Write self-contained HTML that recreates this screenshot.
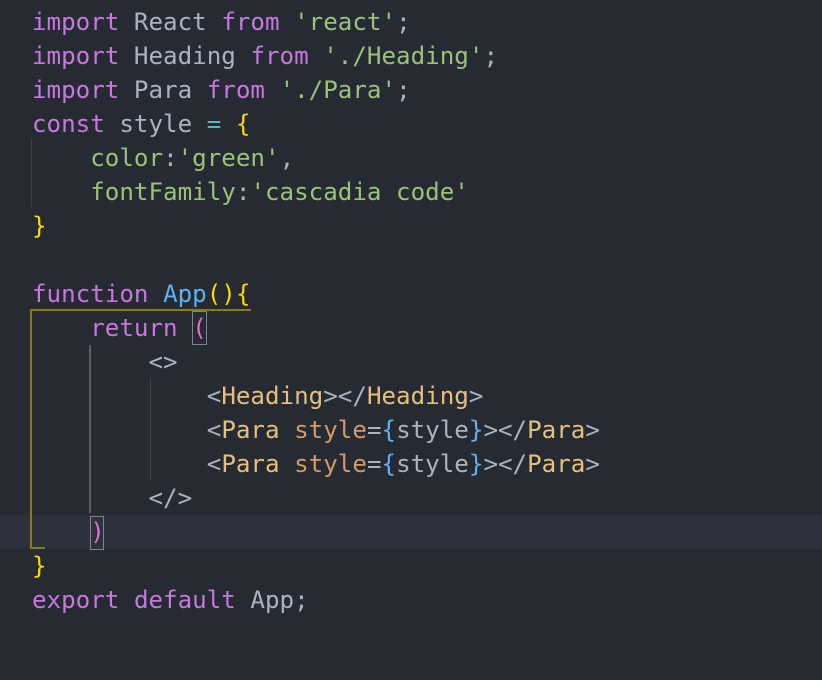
<!DOCTYPE html><html><head><style>
body{margin:0;background:#262a33;width:822px;height:680px;overflow:hidden;position:relative}
pre{margin:0;position:absolute;left:32px;top:5px;font-family:"DejaVu Sans Mono","Liberation Mono",monospace;font-size:24.2px;line-height:34px;color:#abb2bf}
.k{color:#c678dd}.s{color:#98c379}.y{color:#ffd700}.b{color:#61afef}.c{color:#56b6c2}.t{color:#e5c07b}.a{color:#d19a66}.g{color:#abb2bf}
.p{color:#da70d6}
.abs{position:absolute}
</style></head><body>
<div class="abs" style="left:0;top:515px;width:822px;height:34px;background:#2c313c"></div>
<div class="abs" style="left:31px;top:139px;width:1px;height:68px;background:#3b404a"></div>
<div class="abs" style="left:89px;top:345px;width:2px;height:168px;background:#5a606b"></div>
<div class="abs" style="left:150px;top:379px;width:1px;height:102px;background:#3f444e"></div>
<div class="abs" style="left:30px;top:309px;width:221px;height:240px;border-top:2px solid #8a7a1c;border-left:2px solid #8a7a1c;box-sizing:border-box"></div>
<div class="abs" style="left:30px;top:547px;width:15px;height:2px;background:#8a7a1c"></div>
<div class="abs" style="left:192px;top:311px;width:13px;height:32px;border:1px solid #7d8590"></div>
<div class="abs" style="left:90px;top:516px;width:12px;height:32px;border:1px solid #7d8590"></div>
<pre><span class="k">import</span> React <span class="k">from</span> <span class="s">'react'</span>;
<span class="k">import</span> Heading <span class="k">from</span> <span class="s">'./Heading'</span>;
<span class="k">import</span> Para <span class="k">from</span> <span class="s">'./Para'</span>;
<span class="k">const</span> style <span class="c">=</span> <span class="y">{</span>
    <span class="s">color</span>:<span class="s">'green'</span>,
    <span class="s">fontFamily</span>:<span class="s">'cascadia code'</span>
<span class="y">}</span>

<span class="k">function</span> <span class="b">App</span><span class="y">()</span><span class="y">{</span>
    <span class="k">return</span> <span class="p">(</span>
        <span class="g">&lt;&gt;</span>
            <span class="g">&lt;</span><span class="t">Heading</span><span class="g">&gt;&lt;/</span><span class="t">Heading</span><span class="g">&gt;</span>
            <span class="g">&lt;</span><span class="t">Para</span> <span class="a">style</span>=<span class="b">{</span>style<span class="b">}</span><span class="g">&gt;&lt;/</span><span class="t">Para</span><span class="g">&gt;</span>
            <span class="g">&lt;</span><span class="t">Para</span> <span class="a">style</span>=<span class="b">{</span>style<span class="b">}</span><span class="g">&gt;&lt;/</span><span class="t">Para</span><span class="g">&gt;</span>
        <span class="g">&lt;/&gt;</span>
    <span class="p">)</span>
<span class="y">}</span>
<span class="k">export</span> <span class="k">default</span> App;</pre>
</body></html>
